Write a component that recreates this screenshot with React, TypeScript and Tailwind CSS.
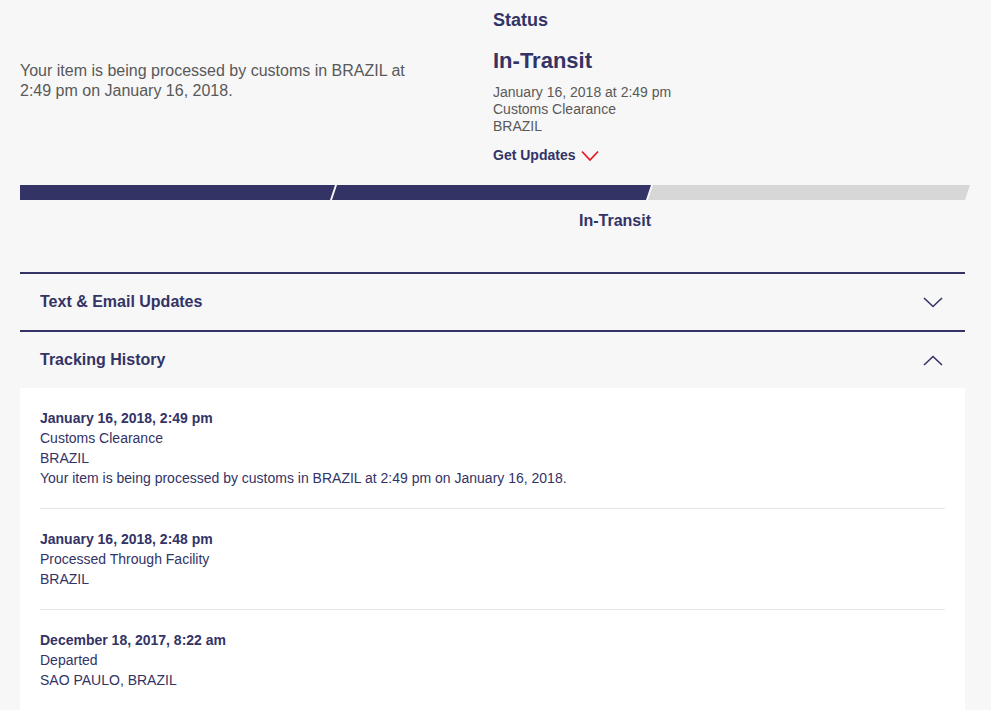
import React from 'react';

const font = { fontFamily: '"Liberation Sans", Arial, sans-serif' };

interface HistoryEntry {
  date: string;
  lines: string[];
}

const history: HistoryEntry[] = [
  {
    date: 'January 16, 2018, 2:49 pm',
    lines: [
      'Customs Clearance',
      'BRAZIL',
      'Your item is being processed by customs in BRAZIL at 2:49 pm on January 16, 2018.',
    ],
  },
  {
    date: 'January 16, 2018, 2:48 pm',
    lines: ['Processed Through Facility', 'BRAZIL'],
  },
  {
    date: 'December 18, 2017, 8:22 am',
    lines: ['Departed', 'SAO PAULO, BRAZIL'],
  },
];

const Chevron = ({ up = false }: { up?: boolean }) => (
  <svg width="20" height="11" viewBox="0 0 20 11" fill="none">
    <path
      d={up ? 'M1 10 L10 1.5 L19 10' : 'M1 1 L10 9.5 L19 1'}
      stroke="#333366"
      strokeWidth="1.6"
    />
  </svg>
);

export default function App() {
  return (
    <div className="min-h-screen bg-[#f7f7f7] pl-[20px] pt-[9px]" style={font}>
      <div className="w-[945px]">
        {/* Summary */}
        <div className="flex">
          <div className="w-[473px] shrink-0 pr-[60px] pt-[52px] text-[16px] leading-[20px] text-[#595959]">
            Your item is being processed by customs in BRAZIL at 2:49 pm on January 16, 2018.
          </div>
          <div>
            <h2 className="text-[18px] font-bold leading-[22px] text-[#333366]">Status</h2>
            <div className="mt-[17px] text-[22px] font-bold leading-[26px] text-[#333366]">In-Transit</div>
            <div className="mt-[10px] text-[14px] leading-[17px] text-[#595959]">
              <div>January 16, 2018 at 2:49 pm</div>
              <div>Customs Clearance</div>
              <div>BRAZIL</div>
            </div>
            <div className="mt-[12px] flex items-center gap-[6px] text-[14px] font-bold leading-[17px] text-[#333366]">
              <span>Get Updates</span>
              <svg width="18" height="12" viewBox="0 0 18 12" fill="none">
                <path d="M1 1.5 L9 10 L17 1.5" stroke="#e71921" strokeWidth="1.8" />
              </svg>
            </div>
          </div>
        </div>

        {/* Progress bar */}
        <div className="mt-[21px] flex h-[15px] w-[950px]">
          <div className="h-full w-[315px] shrink-0 bg-[#333366] [clip-path:polygon(0_0,100%_0,calc(100%-5px)_100%,0_100%)]" />
          <div className="-ml-[3px] h-full w-[319px] shrink-0 bg-[#333366] [clip-path:polygon(5px_0,100%_0,calc(100%-5px)_100%,0_100%)]" />
          <div className="-ml-[3px] h-full w-[322px] shrink-0 bg-[#d7d7d7] [clip-path:polygon(5px_0,100%_0,calc(100%-5px)_100%,0_100%)]" />
        </div>
        <div className="mt-[11px] w-[631px] text-right text-[16px] font-bold leading-[20px] text-[#333366]">
          In-Transit
        </div>

        {/* Accordions */}
        <div className="mt-[41px] border-t-2 border-[#333366]">
          <div className="flex h-[56px] items-center justify-between pl-[20px] pr-[22px]">
            <span className="text-[16px] font-bold text-[#333366]">Text &amp; Email Updates</span>
            <Chevron />
          </div>
        </div>
        <div className="border-t-2 border-[#333366]">
          <div className="flex h-[56px] items-center justify-between pl-[20px] pr-[22px]">
            <span className="text-[16px] font-bold text-[#333366]">Tracking History</span>
            <Chevron up />
          </div>
          <div className="bg-white px-[20px]">
            {history.map((entry, i) => (
              <div
                key={i}
                className="border-b border-[#e6e6e6] py-[20px] text-[14px] leading-[20px] text-[#333366]"
              >
                <div className="font-bold">{entry.date}</div>
                {entry.lines.map((line, j) => (
                  <div key={j}>{line}</div>
                ))}
              </div>
            ))}
          </div>
        </div>
      </div>
    </div>
  );
}
